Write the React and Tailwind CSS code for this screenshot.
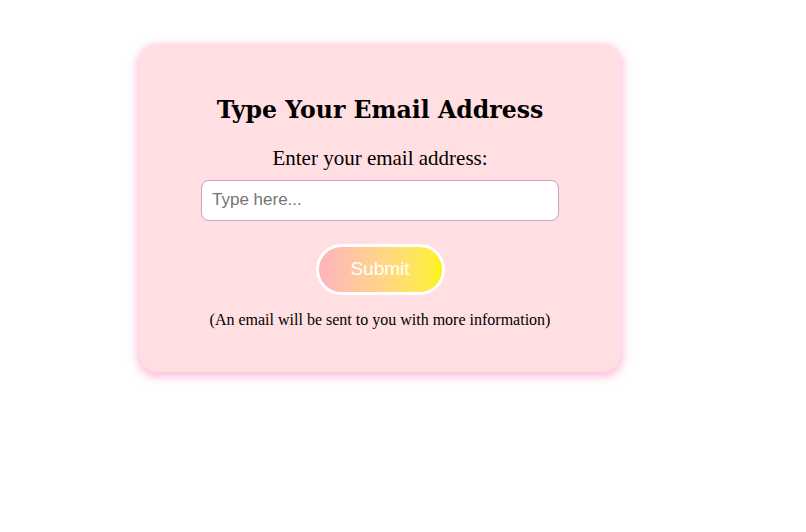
export default function App() {
  return (
    <div className="min-h-screen bg-white pt-[44px] pl-[139px]">
      <div className="w-[482px] h-[328px] rounded-[18px] bg-[#ffdfe1] shadow-[0_3px_8px_2px_rgba(255,140,190,0.55)] flex flex-col items-center pt-[55px] font-['Liberation_Serif',serif] text-black">
        <h1 className="text-[23.6px] font-bold leading-none font-['DejaVu_Serif',serif]">Type Your Email Address</h1>
        <p className="mt-[25px] text-[21px] leading-none">Enter your email address:</p>
        <input
          type="text"
          placeholder="Type here..."
          className="mt-[11px] w-[358px] h-[41px] rounded-[8px] border border-[#cf9fc6] bg-white px-[10px] text-[17px] font-['Liberation_Sans',sans-serif] placeholder:text-[#757575] outline-none"
        />
        <button className="mt-[23px] w-[129px] h-[51px] rounded-full border-[3px] border-white bg-gradient-to-r from-[#ffb3bd] to-[#fff200] text-white text-[19px] font-['Liberation_Sans',sans-serif]">
          Submit
        </button>
        <p className="mt-[17px] text-[16px] leading-none">(An email will be sent to you with more information)</p>
      </div>
    </div>
  );
}
